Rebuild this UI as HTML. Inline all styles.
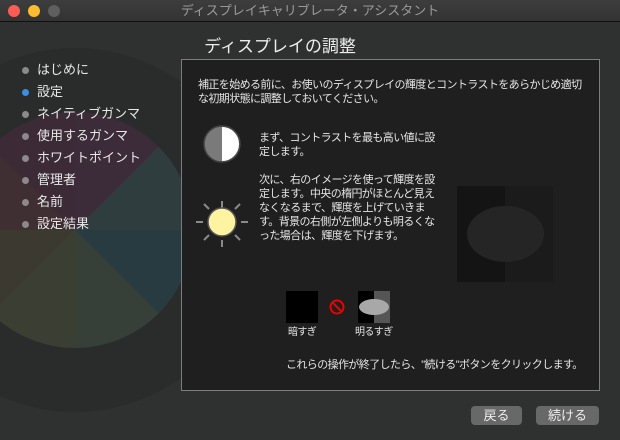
<!DOCTYPE html><html><head><meta charset="utf-8"><style>
*{margin:0;padding:0;box-sizing:border-box}
body{width:620px;height:440px;overflow:hidden;background:#2f3030;font-family:"Liberation Sans","Noto Sans CJK JP",sans-serif;color:#e8e8e8;position:relative}
.tb{position:absolute;left:0;top:0;width:620px;height:22px;background:linear-gradient(#3d3d3d,#333);border-bottom:1px solid #111;text-align:center;font-size:13px;line-height:22px;color:#9a9a9a}
.dot{position:absolute;top:5px;width:12px;height:12px;border-radius:50%}
.wheel{position:absolute;left:-107px;top:48px;width:364px;height:364px;border-radius:50%;background:#2a2b2b}
.wheel2{position:absolute;left:-43px;top:112px;width:236px;height:236px;border-radius:50%;background:conic-gradient(#3c2b38 0 45deg,#2f3d3f 45deg 90deg,#283b41 90deg 135deg,#363f38 135deg 180deg,#3b3e33 180deg 225deg,#3c3a30 225deg 270deg,#3f2f32 270deg 315deg,#3c2b37 315deg 360deg)}
h1{position:absolute;left:0;width:560px;top:32px;text-align:center;font-size:17px;font-weight:normal;color:#eee}
.nav{position:absolute;left:22px;top:60px;font-size:13px}
.nav div{height:22px;line-height:20px;position:relative;padding-left:15px}
.nav div:before{content:"";position:absolute;left:0;top:7px;width:7px;height:7px;border-radius:50%;background:#8a8a8a}
.nav div.a:before{background:#3a8ee6}
.panel{position:absolute;left:181px;top:59px;width:419px;height:332px;background:#1f1f1f;border:1px solid #7c7c7c}
.t{position:absolute;font-size:11px;line-height:14px;color:#e6e6e6;letter-spacing:-.6px;white-space:nowrap}
.btn{position:absolute;top:406px;height:19px;border-radius:4px;background:#686868;color:#eee;font-size:13px;text-align:center;line-height:19px}
</style></head><body>
<div class="wheel"></div><div class="wheel2"></div>
<div class="tb">ディスプレイキャリブレータ・アシスタント
<div class="dot" style="left:8px;background:#fd5c55"></div><div class="dot" style="left:28px;background:#fdbb2e"></div><div class="dot" style="left:48px;background:#5f5f5f"></div></div>
<h1>ディスプレイの調整</h1>
<div class="nav"><div>はじめに</div><div class="a">設定</div><div>ネイティブガンマ</div><div>使用するガンマ</div><div>ホワイトポイント</div><div>管理者</div><div>名前</div><div>設定結果</div></div>
<div class="panel"></div>
<div class="t" style="left:198px;top:78px">補正を始める前に、お使いのディスプレイの輝度とコントラストをあらかじめ適切<br>な初期状態に調整しておいてください。</div>
<svg style="position:absolute;left:190px;top:115px" width="70" height="140">
<circle cx="32" cy="30" r="19" fill="#222" opacity=".6"/>
<circle cx="32" cy="29" r="18" fill="#7a7a7a" stroke="#444" stroke-width="1.5"/>
<path d="M32 12 A17 17 0 0 1 32 46 Z" fill="#fff"/>
<g stroke="#8a8a8a" stroke-width="2"><line x1="32" y1="86" x2="32" y2="93"/><line x1="32" y1="125" x2="32" y2="132"/><line x1="6" y1="107" x2="13" y2="107"/><line x1="51" y1="107" x2="58" y2="107"/><line x1="14" y1="89" x2="19" y2="94"/><line x1="45" y1="120" x2="50" y2="125"/><line x1="50" y1="89" x2="45" y2="94"/><line x1="19" y1="120" x2="14" y2="125"/></g>
<circle cx="32" cy="107" r="14" fill="#fdf3a0" stroke="#555" stroke-width="1.5"/>
</svg>
<div class="t" style="left:259px;top:131px">まず、コントラストを最も高い値に設<br>定します。</div>
<div class="t" style="left:259px;top:173px">次に、右のイメージを使って輝度を設<br>定します。中央の楕円がほとんど見え<br>なくなるまで、輝度を上げていきま<br>す。背景の右側が左側よりも明るくな<br>った場合は、輝度を下げます。</div>
<div style="position:absolute;left:457px;top:186px;width:48px;height:96px;background:#141414"></div>
<div style="position:absolute;left:505px;top:186px;width:48px;height:96px;background:#1b1b1b"></div>
<div style="position:absolute;left:467px;top:206px;width:77px;height:56px;border-radius:50%;background:#252525"></div>
<div style="position:absolute;left:286px;top:291px;width:32px;height:32px;background:#000"></div>
<svg style="position:absolute;left:328px;top:298px" width="18" height="18"><circle cx="9" cy="9" r="6.5" fill="none" stroke="#e00" stroke-width="2"/><line x1="4.5" y1="4.5" x2="13.5" y2="13.5" stroke="#e00" stroke-width="2"/></svg>
<div style="position:absolute;left:358px;top:291px;width:16px;height:32px;background:#000"></div>
<div style="position:absolute;left:374px;top:291px;width:16px;height:32px;background:#555"></div>
<div style="position:absolute;left:359px;top:299px;width:30px;height:16px;border-radius:50%;background:#a8a8a8"></div>
<div class="t" style="left:288px;top:326px;font-size:10px">暗すぎ</div>
<div class="t" style="left:355px;top:326px;font-size:10px">明るすぎ</div>
<div class="t" style="left:286px;top:358px">これらの操作が終了したら、"続ける"ボタンをクリックします。</div>
<div class="btn" style="left:471px;width:51px">戻る</div>
<div class="btn" style="left:536px;width:63px">続ける</div>
</body></html>
